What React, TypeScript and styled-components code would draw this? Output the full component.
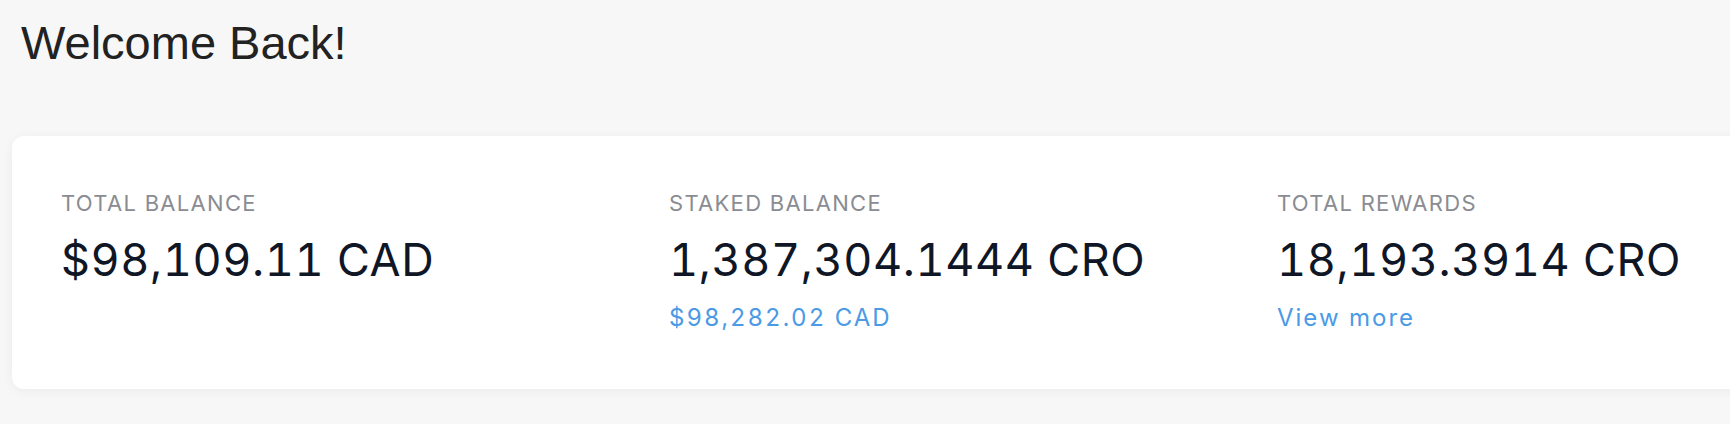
import React from 'react';
import styled, { createGlobalStyle } from 'styled-components';

const GlobalStyle = createGlobalStyle`
  html, body {
    margin: 0;
    padding: 0;
    background: #f7f7f7;
    overflow: hidden;
  }
  body {
    font-family: Inter, "Noto Sans", sans-serif;
  }
`;

const Page = styled.div`
  min-height: 424px;
  padding: 14px 0 0 12px;
  box-sizing: border-box;
  overflow: hidden;
`;

const Heading = styled.h1`
  margin: 0 0 64px 0;
  padding-left: 9px;
  font-family: "Liberation Sans", Arial, sans-serif;
  font-size: 47px;
  line-height: 58px;
  font-weight: 400;
  color: #222222;
`;

const Card = styled.div`
  width: 1900px;
  display: grid;
  grid-template-columns: repeat(3, 608px);
  padding: 54px 50px 57px 49px;
  box-sizing: border-box;
  background: #ffffff;
  border-radius: 12px;
  box-shadow: 0 2px 12px rgba(0, 0, 0, 0.05);
`;

const Stat = styled.div`
  display: flex;
  flex-direction: column;
`;

const Label = styled.div`
  font-size: 22px;
  line-height: 26px;
  letter-spacing: 1.3px;
  color: #8a8c92;
  text-transform: uppercase;
`;

const Value = styled.div`
  margin-top: 17px;
  font-size: 45px;
  line-height: 54px;
  letter-spacing: 0.6px;
  font-variant-numeric: tabular-nums;
  color: #0f1626;
`;

const Sub = styled.a`
  margin-top: 17px;
  font-size: 24px;
  line-height: 28px;
  letter-spacing: 2px;
  font-variant-numeric: tabular-nums;
  color: #4a9ae6;
  text-decoration: none;
  cursor: pointer;
`;

interface StatItem {
  label: string;
  value: string;
  sub?: string;
}

const stats: StatItem[] = [
  { label: 'Total Balance', value: '$98,109.11 CAD' },
  { label: 'Staked Balance', value: '1,387,304.1444 CRO', sub: '$98,282.02 CAD' },
  { label: 'Total Rewards', value: '18,193.3914 CRO', sub: 'View more' },
];

export default function App() {
  return (
    <Page>
      <GlobalStyle />
      <Heading>Welcome Back!</Heading>
      <Card>
        {stats.map(s => (
          <Stat key={s.label}>
            <Label>{s.label}</Label>
            <Value>{s.value}</Value>
            {s.sub && <Sub>{s.sub}</Sub>}
          </Stat>
        ))}
      </Card>
    </Page>
  );
}
